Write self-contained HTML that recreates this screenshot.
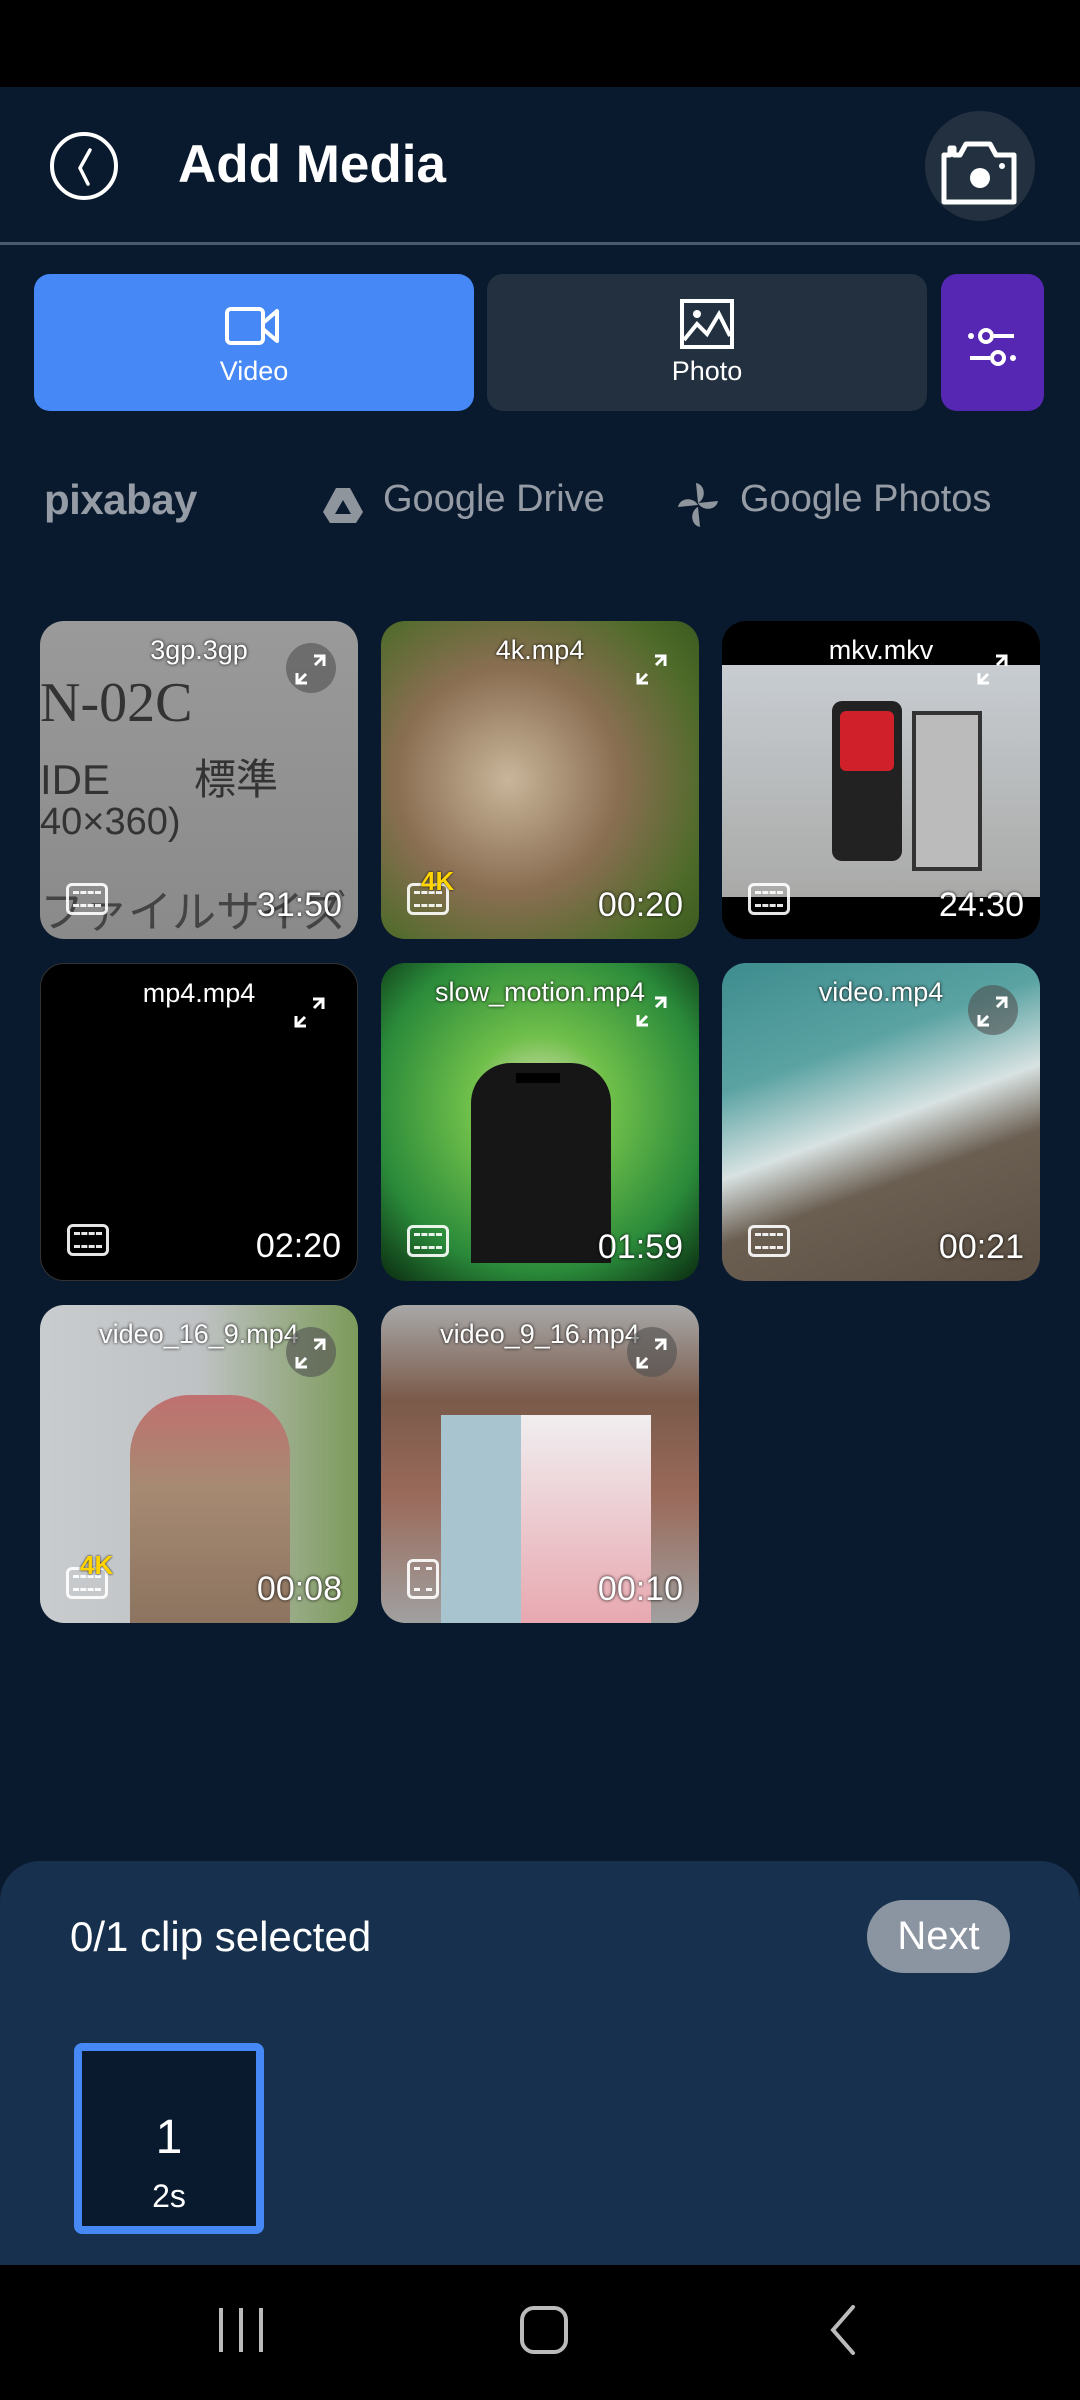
<!DOCTYPE html>
<html><head><meta charset="utf-8"><style>
*{margin:0;padding:0;box-sizing:border-box}
body{width:1080px;height:2400px;background:#0a1a2e;font-family:"Liberation Sans","Noto Sans CJK JP",sans-serif;position:relative;overflow:hidden;color:#fff}
.abs{position:absolute}
.tile{position:absolute;width:318px;height:318px;border-radius:24px;overflow:hidden}
.name{position:absolute;top:14px;left:0;right:0;text-align:center;font-size:27px;color:#fff;text-shadow:0 0 3px #000}
.dur{position:absolute;right:16px;bottom:14px;font-size:34px;color:#fff;text-shadow:0 0 3px #000}
.exp{position:absolute;right:22px;top:22px;width:50px;height:50px;border-radius:25px;background:rgba(80,80,80,.6)}
.ar{position:absolute;right:30px;top:32px}
.film{position:absolute;left:26px;bottom:24px;width:42px;height:32px;border:3px solid #fff;border-radius:6px;opacity:.9}
.film:before,.film:after{content:"";position:absolute;left:4px;right:4px;height:0;border-top:3px dashed #fff}
.film:before{top:5px}.film:after{bottom:5px}
.k4{position:absolute;left:40px;bottom:42px;font-size:26px;font-weight:bold;color:#ffd400;text-shadow:0 0 2px #000}
</style></head><body>
<svg width="0" height="0" style="position:absolute"><defs><g id="arr"><path d="M20 3 L30 3 L30 13 M30 3 L21 12 M3 20 L3 30 L13 30 M3 30 L12 21" fill="none" stroke="#fff" stroke-width="3"/></g></defs></svg>
<div class="abs" style="left:0;top:0;width:1080px;height:87px;background:#000"></div>
<!-- header -->
<svg class="abs" style="left:48px;top:130px" width="72" height="72" viewBox="0 0 72 72"><circle cx="36" cy="36" r="32" fill="none" stroke="#fff" stroke-width="4"/><path d="M42 20 L32 38 L40 54" fill="none" stroke="#fff" stroke-width="3.5" stroke-linecap="round"/></svg>
<div class="abs" style="left:178px;top:134px;font-size:53px;font-weight:bold">Add Media</div>
<div class="abs" style="left:925px;top:111px;width:110px;height:110px;border-radius:55px;background:#22303f"></div>
<svg class="abs" style="left:940px;top:130px" width="80" height="80" viewBox="0 0 80 80"><path d="M4 25 H10 V18 H14 V25 H20 L26 14 H50 L56 25 H74 V72 H4 Z" fill="none" stroke="#fff" stroke-width="5" stroke-linejoin="round"/><circle cx="40" cy="48" r="10" fill="#fff"/><circle cx="62" cy="36" r="3" fill="#fff"/></svg>
<div class="abs" style="left:0;top:242px;width:1080px;height:3px;background:#4a5a6c"></div>
<!-- tabs -->
<div class="abs" style="left:34px;top:274px;width:440px;height:137px;border-radius:16px;background:#4688f5"></div>
<svg class="abs" style="left:224px;top:303px" width="58" height="44" viewBox="0 0 58 44"><rect x="3" y="6" width="36" height="34" rx="4" fill="none" stroke="#fff" stroke-width="4"/><path d="M39 20 L53 8 V38 L39 26" fill="none" stroke="#fff" stroke-width="4" stroke-linejoin="round"/></svg>
<div class="abs" style="left:34px;top:356px;width:440px;text-align:center;font-size:27px">Video</div>
<div class="abs" style="left:487px;top:274px;width:440px;height:137px;border-radius:16px;background:#22303f"></div>
<svg class="abs" style="left:679px;top:298px" width="56" height="52" viewBox="0 0 56 52"><rect x="3" y="3" width="50" height="46" fill="none" stroke="#fff" stroke-width="4"/><circle cx="18" cy="16" r="4" fill="#fff"/><path d="M5 42 L18 26 L28 36 L40 16 L51 38" fill="none" stroke="#fff" stroke-width="4"/></svg>
<div class="abs" style="left:487px;top:356px;width:440px;text-align:center;font-size:27px">Photo</div>
<div class="abs" style="left:941px;top:274px;width:103px;height:137px;border-radius:16px;background:#5527b3"></div>
<svg class="abs" style="left:968px;top:328px" width="50" height="40" viewBox="0 0 50 40"><circle cx="3" cy="8" r="3" fill="#fff"/><circle cx="18" cy="8" r="6" fill="none" stroke="#fff" stroke-width="4"/><rect x="26" y="6" width="20" height="4" fill="#fff"/><rect x="2" y="28" width="20" height="4" fill="#fff"/><circle cx="30" cy="30" r="6" fill="none" stroke="#fff" stroke-width="4"/><circle cx="45" cy="30" r="3" fill="#fff"/></svg>
<!-- sources -->
<div class="abs" style="left:44px;top:476px;font-size:42px;color:#959ca5;font-weight:bold;letter-spacing:-0.5px">pixabay</div>
<svg class="abs" style="left:322px;top:486px" width="42" height="38" viewBox="0 0 42 38"><path d="M14 2 H28 L41 26 L34 37 H8 L1 26 Z" fill="#8f959d"/><path d="M21 14 L29 28 H13 Z" fill="#0a1a2e"/></svg>
<div class="abs" style="left:383px;top:478px;font-size:38px;color:#959ca5">Google Drive</div>
<svg class="abs" style="left:676px;top:481px" width="44" height="48" viewBox="0 0 44 48"><path d="M20 2 C30 4 30 18 22 22 Z M42 20 C40 30 26 30 22 22 Z M24 46 C14 44 14 30 22 26 Z M2 26 C4 16 18 16 22 24 Z" fill="#8f959d"/></svg>
<div class="abs" style="left:740px;top:478px;font-size:38px;color:#959ca5">Google Photos</div>
<!-- grid -->
<div class="tile" style="left:40px;top:621px;background:linear-gradient(#9a9a9a,#8a8a8a)"><div class="abs" style="left:0;top:50px;font-size:56px;color:#333;font-family:'Liberation Serif',serif">N-02C</div><div class="abs" style="left:0;top:125px;font-size:42px;color:#333">IDE　　標準</div><div class="abs" style="left:0;top:180px;font-size:38px;color:#333">40×360)</div><div class="abs" style="left:0;top:255px;font-size:44px;color:#444">ファイルサイズ無制限</div><div class="name">3gp.3gp</div><div class="exp"></div><svg class="ar" width="34" height="34"><use href="#arr"/></svg><div class="film"></div><div class="dur">31:50</div></div>
<div class="tile" style="left:381px;top:621px;background:radial-gradient(circle at 40% 50%,#c9b69a 0,#8a6e52 45%,#4f6b2a 80%,#3a5a1e)"><div class="name">4k.mp4</div><svg class="ar" width="34" height="34"><use href="#arr"/></svg><div class="film"></div><div class="k4">4K</div><div class="dur">00:20</div></div>
<div class="tile" style="left:722px;top:621px;background:#000"><div class="abs" style="left:0;top:44px;width:318px;height:232px;background:linear-gradient(#c8cdd2,#a9aaa8)"></div><div class="abs" style="left:110px;top:80px;width:70px;height:160px;background:#222;border-radius:10px"></div><div class="abs" style="left:118px;top:90px;width:54px;height:60px;background:#d0202a;border-radius:6px"></div><div class="abs" style="left:190px;top:90px;width:70px;height:160px;background:#bbb;border:4px solid #333"></div><div class="name">mkv.mkv</div><svg class="ar" width="34" height="34"><use href="#arr"/></svg><div class="film"></div><div class="dur">24:30</div></div>
<div class="tile" style="left:40px;top:963px;background:#000;border:1px solid #333"><div class="name">mp4.mp4</div><svg class="ar" width="34" height="34"><use href="#arr"/></svg><div class="film"></div><div class="dur">02:20</div></div>
<div class="tile" style="left:381px;top:963px;background:radial-gradient(circle at 50% 45%,#e9e3c8 0,#6fbf4a 30%,#2a8a3a 70%,#0a2a10)"><div class="abs" style="left:90px;top:100px;width:140px;height:200px;background:#161616;border-radius:40px 40px 0 0"></div><div class="abs" style="left:135px;top:110px;width:44px;height:10px;background:#000"></div><div class="name">slow_motion.mp4</div><svg class="ar" width="34" height="34"><use href="#arr"/></svg><div class="film"></div><div class="dur">01:59</div></div>
<div class="tile" style="left:722px;top:963px;background:linear-gradient(160deg,#3e8c8e 0,#5ba3a3 30%,#d8e2e2 50%,#6b5f52 65%,#5a4d42)"><div class="name">video.mp4</div><div class="exp"></div><svg class="ar" width="34" height="34"><use href="#arr"/></svg><div class="film"></div><div class="dur">00:21</div></div>
<div class="tile" style="left:40px;top:1305px;background:linear-gradient(90deg,#c9ccce,#bfc2c4 50%,#7c9a5a)"><div class="abs" style="left:90px;top:90px;width:160px;height:228px;background:linear-gradient(#c07070 0,#a78a72 40%,#8c7460);border-radius:60px 60px 0 0"></div><div class="name">video_16_9.mp4</div><div class="exp"></div><svg class="ar" width="34" height="34"><use href="#arr"/></svg><div class="film"></div><div class="k4">4K</div><div class="dur">00:08</div></div>
<div class="tile" style="left:381px;top:1305px;background:linear-gradient(#a8a8a8 0,#7a5a4a 30%,#9a6a5a 60%,#a0a0a0)"><div class="abs" style="left:60px;top:110px;width:90px;height:208px;background:#a8c4cf"></div><div class="abs" style="left:140px;top:110px;width:130px;height:208px;background:linear-gradient(#f0eef0,#e8a8b0)"></div><div class="name">video_9_16.mp4</div><div class="exp"></div><svg class="ar" width="34" height="34"><use href="#arr"/></svg><div class="film" style="width:32px;height:40px"></div><div class="dur">00:10</div></div>
<!-- bottom panel -->
<div class="abs" style="left:0;top:1861px;width:1080px;height:420px;background:#16304d;border-radius:40px 40px 0 0"></div>
<div class="abs" style="left:70px;top:1913px;font-size:42px">0/1 clip selected</div>
<div class="abs" style="left:867px;top:1900px;width:143px;height:73px;border-radius:37px;background:#8b95a1;text-align:center;line-height:73px;font-size:40px">Next</div>
<div class="abs" style="left:74px;top:2043px;width:190px;height:191px;border:8px solid #4688f5;border-radius:8px;background:#0a1a2e"></div>
<div class="abs" style="left:74px;top:2110px;width:190px;text-align:center;font-size:48px">1</div>
<div class="abs" style="left:74px;top:2178px;width:190px;text-align:center;font-size:32px">2s</div>
<!-- nav -->
<div class="abs" style="left:0;top:2265px;width:1080px;height:135px;background:#000"></div>
<div class="abs" style="left:219px;top:2308px;width:4px;height:44px;background:#bbb"></div>
<div class="abs" style="left:239px;top:2308px;width:4px;height:44px;background:#bbb"></div>
<div class="abs" style="left:259px;top:2308px;width:4px;height:44px;background:#bbb"></div>
<div class="abs" style="left:520px;top:2306px;width:48px;height:48px;border:4px solid #bbb;border-radius:14px"></div>
<svg class="abs" style="left:828px;top:2304px" width="30" height="52" viewBox="0 0 30 52"><path d="M25 3 L5 26 L25 49" fill="none" stroke="#bbb" stroke-width="4" stroke-linecap="round"/></svg>
</body></html>
